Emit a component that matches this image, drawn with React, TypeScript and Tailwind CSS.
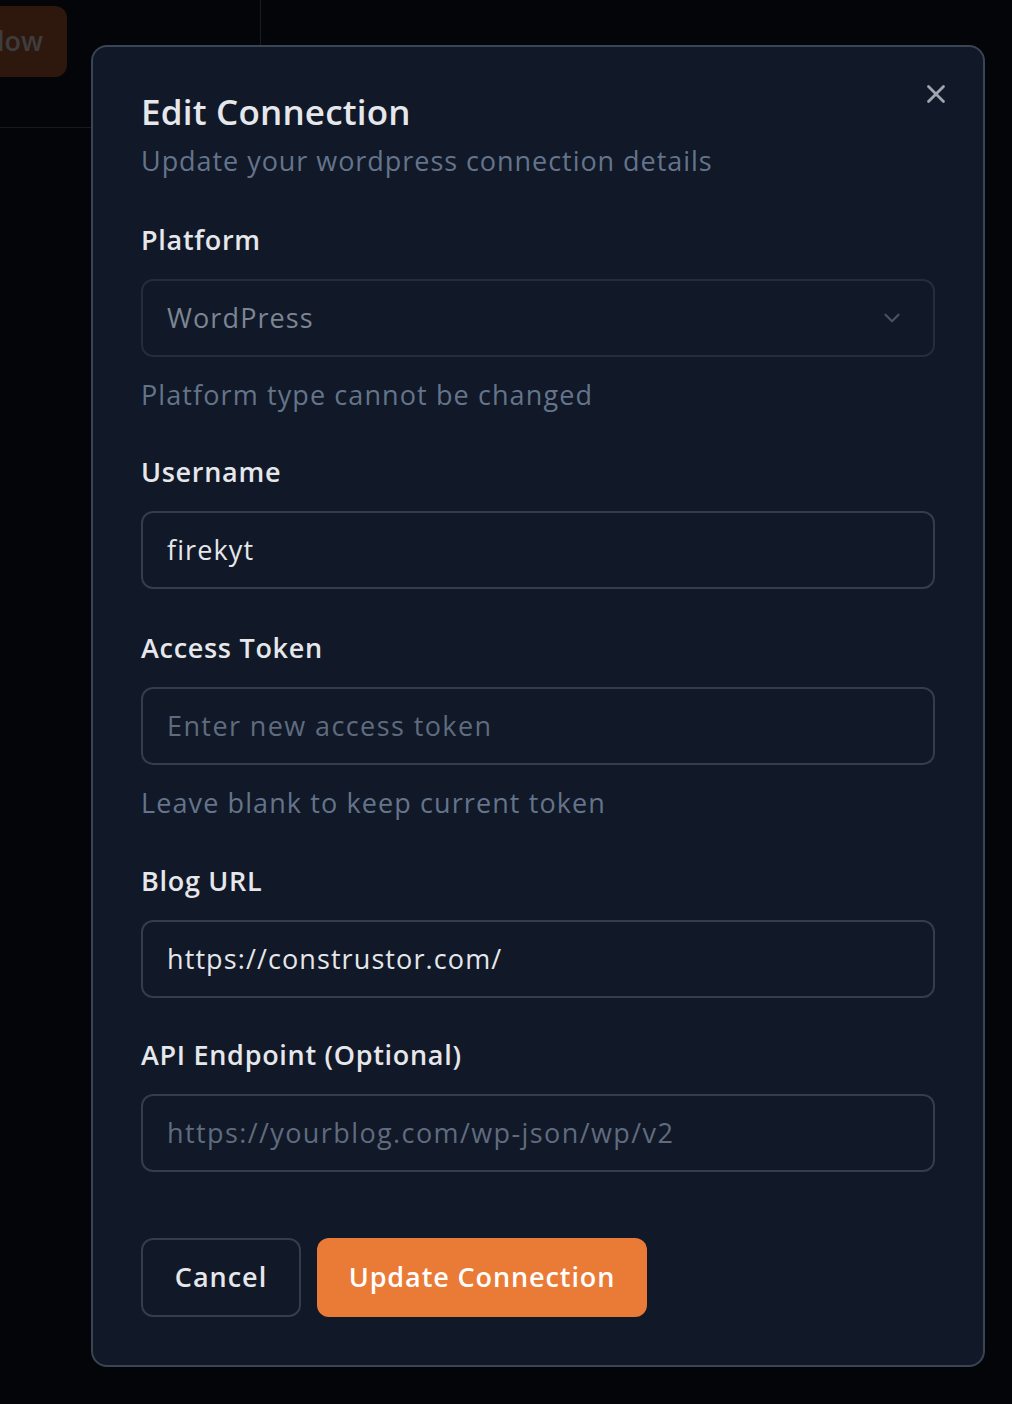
import { ChevronDown, X } from "lucide-react";

const font = { fontFamily: '"Open Sans", "Noto Sans", sans-serif' };

function Label({ children }: { children: React.ReactNode }) {
  return <div className="h-[36px] text-[27px] leading-[36px] font-semibold tracking-[0.7px] text-[#e5e7eb]">{children}</div>;
}

function Helper({ children }: { children: React.ReactNode }) {
  return <div className="mt-[20px] h-[36px] text-[27px] leading-[36px] tracking-[1.1px] text-[#64748b]">{children}</div>;
}

function Field({ value, placeholder }: { value?: string; placeholder?: string }) {
  return (
    <div className="mt-[21px] h-[78px] rounded-[12px] border-2 border-[#343d4c] flex items-center px-[24px] text-[27px] tracking-[1.1px]">
      {value ? (
        <span className="text-[#e5e7eb]">{value}</span>
      ) : (
        <span className="text-[#5f6b7e] tracking-[1.4px]">{placeholder}</span>
      )}
    </div>
  );
}

export default function App() {
  return (
    <div className="relative w-[1012px] h-[1404px] bg-[#040508] overflow-hidden" style={font}>
      {/* dimmed page behind the overlay */}
      <div className="absolute left-[-60px] top-[6px] w-[127px] h-[71px] rounded-[12px] bg-[#2e180d] flex items-center justify-end pr-[24px] text-[27px] font-semibold text-[#3d3d3f]">
        low
      </div>
      <div className="absolute left-[260px] top-0 w-[1px] h-[45px] bg-[#181b22]" />
      <div className="absolute left-0 top-[127px] w-[91px] h-[1px] bg-[#16191f]" />

      {/* dialog */}
      <div className="absolute left-[91px] top-[45px] w-[894px] h-[1322px] rounded-[16px] border-2 border-[#3a4454] bg-[#111827] px-[48px] pt-[43px]">
        <button className="absolute right-[32px] top-[32px] text-[#a0a6b1]">
          <X size={30} strokeWidth={2.2} />
        </button>

        <div className="h-[44px] text-[35px] leading-[44px] font-semibold tracking-[0.2px] text-[#e5e7eb]">Edit Connection</div>
        <div className="mt-[9px] h-[36px] text-[27px] leading-[36px] tracking-[0.95px] text-[#64748b]">
          Update your wordpress connection details
        </div>

        <div className="mt-[43px]">
          <Label>Platform</Label>
          <div className="mt-[21px] h-[78px] rounded-[12px] border-2 border-[#252d3b] flex items-center justify-between px-[24px] pr-[28px] text-[27px] tracking-[1.1px]">
            <span className="text-[#7c8594]">WordPress</span>
            <ChevronDown size={26} strokeWidth={2} className="text-[#4a5261]" />
          </div>
          <Helper>Platform type cannot be changed</Helper>
        </div>

        <div className="mt-[41px]">
          <Label>Username</Label>
          <Field value="firekyt" />
        </div>

        <div className="mt-[41px]">
          <Label>Access Token</Label>
          <Field placeholder="Enter new access token" />
          <Helper>Leave blank to keep current token</Helper>
        </div>

        <div className="mt-[42px]">
          <Label>Blog URL</Label>
          <Field value="https://construstor.com/" />
        </div>

        <div className="mt-[39px]">
          <Label>API Endpoint (Optional)</Label>
          <Field placeholder="https://yourblog.com/wp-json/wp/v2" />
        </div>

        <div className="mt-[66px] flex gap-[16px]">
          <button className="h-[79px] w-[160px] rounded-[12px] border-2 border-[#343d4c] text-[27px] font-semibold tracking-[1px] text-[#e5e7eb]">
            Cancel
          </button>
          <button className="h-[79px] w-[330px] rounded-[12px] bg-[#e97b36] text-[27px] font-semibold tracking-[0.9px] text-white">
            Update Connection
          </button>
        </div>
      </div>
    </div>
  );
}
